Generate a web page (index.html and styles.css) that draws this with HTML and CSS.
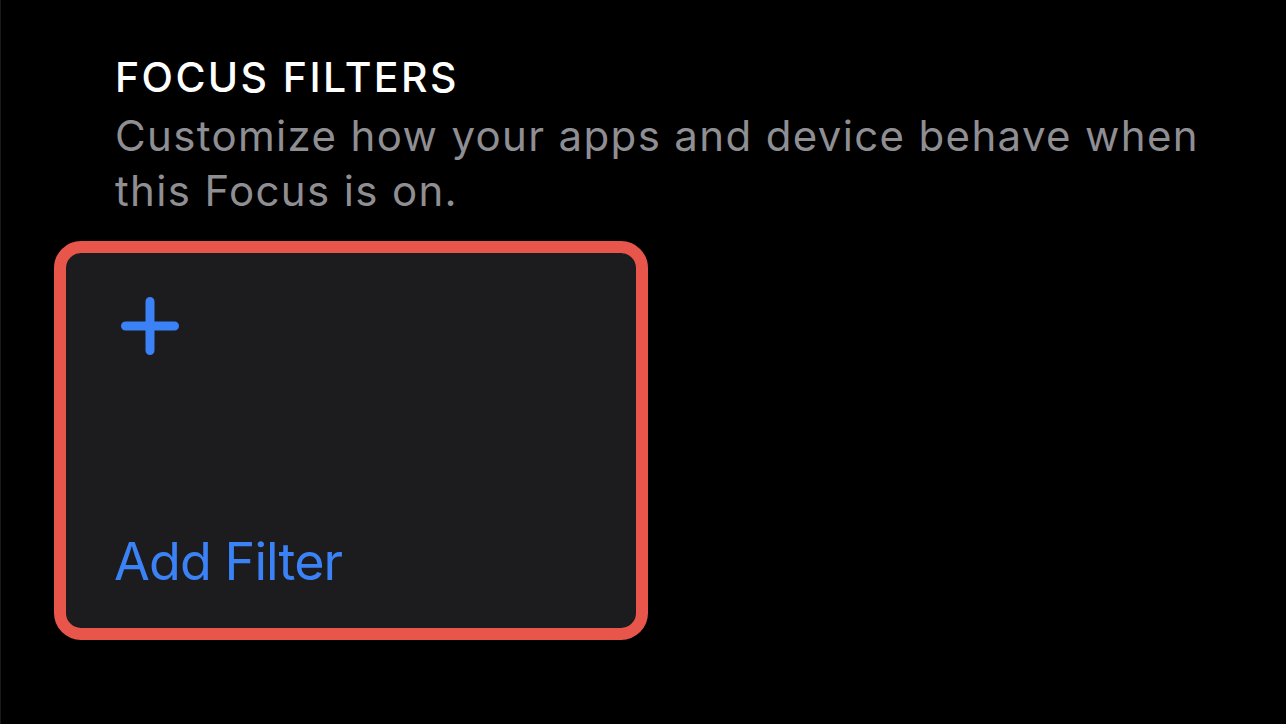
FILE: index.html
```html
<!DOCTYPE html>
<html lang="en">
<head>
  <meta charset="UTF-8" />
  <meta name="viewport" content="width=device-width, initial-scale=1" />
  <title>Focus Filters</title>
  <link rel="stylesheet" href="styles.css">
</head>
<body>
  <div class="screen">
    <div class="section-head">
      <h2>FOCUS FILTERS</h2>
      <p>Customize how your apps and device behave when this Focus is on.</p>
    </div>

    <div class="filter-card">
      <svg class="plus" width="58" height="58" viewBox="0 0 58 58">
        <path d="M29 4.5V53.5M4.5 29H53.5" stroke="#3b82f7" stroke-width="9" stroke-linecap="round" fill="none"/>
      </svg>
      <span class="add-label">Add Filter</span>
    </div>
  </div>
</body>
</html>
```

FILE: styles.css
```css
html, body {
  margin: 0;
  background: #000;
}

body {
  font-family: 'Inter', 'Noto Sans', sans-serif;
  color: #fff;
  min-height: 100vh;
  border-left: 1px solid #1a1a1a;
  box-sizing: border-box;
}

.screen {
  padding: 52px 0 0 53px;
}

.section-head {
  padding-left: 61px;
}

.section-head h2 {
  margin: 0;
  font-size: 41px;
  line-height: 50px;
  font-weight: 500;
  letter-spacing: 2.4px;
  color: #fff;
}

.section-head p {
  margin: 6px 0 0 0;
  width: 1110px;
  font-size: 42px;
  line-height: 55px;
  letter-spacing: 1.35px;
  color: #8e8e93;
}

/* Add filter tile, outlined in red */
.filter-card {
  margin-top: 23px;
  width: 570px;
  height: 375px;
  box-sizing: content-box;
  background: #1c1c1e;
  border: 12px solid #e8554a;
  border-radius: 27px;
  display: flex;
  flex-direction: column;
  justify-content: space-between;
  padding: 0;
}

.plus {
  display: block;
  margin: 44px 0 0 55px;
}

.add-label {
  margin: 0 0 36px 48px;
  font-size: 52px;
  line-height: 60px;
  letter-spacing: -0.9px;
  color: #3b82f7;
}
```
